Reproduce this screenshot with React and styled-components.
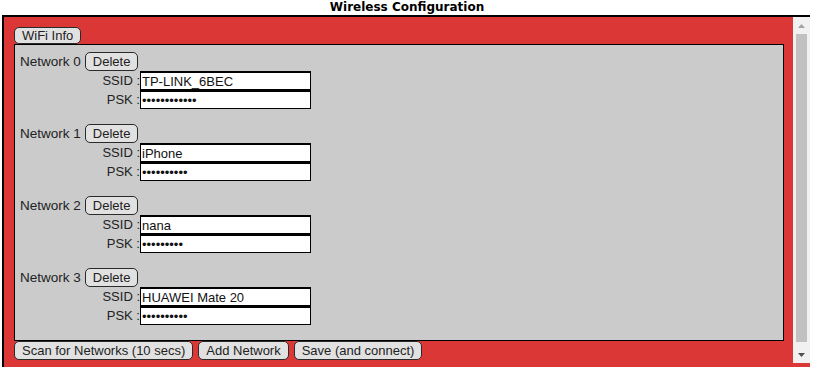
import React from 'react'
import styled, { createGlobalStyle } from 'styled-components'

const networks = [
  { ssid: 'TP-LINK_6BEC', psk: 12 },
  { ssid: 'iPhone', psk: 10 },
  { ssid: 'nana', psk: 9 },
  { ssid: 'HUAWEI Mate 20', psk: 10 },
]

const App = () => {
  return (
    <>
      <Global />
      <Page>
        <Title>Wireless Configuration</Title>
        <Box>
          <Main>
            <TabButton>WiFi Info</TabButton>
            <Panel>
              {networks.map((n, i) => (
                <Block key={i}>
                  <Header>
                    Network {i}
                    <Button>Delete</Button>
                  </Header>
                  <Field>
                    <Label>SSID :</Label>
                    <Input type="text" defaultValue={n.ssid} />
                  </Field>
                  <Field>
                    <Label>PSK :</Label>
                    <Input type="password" defaultValue={'x'.repeat(n.psk)} />
                  </Field>
                </Block>
              ))}
            </Panel>
            <Actions>
              <Button>Scan for Networks (10 secs)</Button>
              <Button>Add Network</Button>
              <Button>Save (and connect)</Button>
            </Actions>
          </Main>
          <Scrollbar>
            <Arrow>
              <svg width="7" height="4" viewBox="0 0 7 4"><path d="M0 4 L3.5 0 L7 4 Z" fill="#a3a3a3" /></svg>
            </Arrow>
            <Track>
              <Thumb />
            </Track>
            <Arrow>
              <svg width="7" height="4" viewBox="0 0 7 4"><path d="M0 0 L3.5 4 L7 0 Z" fill="#505050" /></svg>
            </Arrow>
          </Scrollbar>
        </Box>
      </Page>
    </>
  )
}

export default App

const Global = createGlobalStyle`
body {
  margin: 0;
  background: #fff;
  font-family: "Liberation Sans", Arial, sans-serif;
  font-size: 13px;
  color: #222;
}
`
const Page = styled.div`
width: 814px;
height: 367px;
overflow: hidden;
`
const Title = styled.div`
height: 15px;
line-height: 15px;
text-align: center;
font-family: "DejaVu Sans", sans-serif;
font-weight: bold;
font-size: 12px;
color: #000;
`
const Box = styled.div`
box-sizing: border-box;
margin: 0 4px 0 2px;
height: 356px;
border: 2px solid #000;
border-right: none;
background: #dc3737;
display: flex;
`
const Main = styled.div`
flex: 1;
padding: 10px 9px 10px 10px;
overflow: hidden;
`
const Scrollbar = styled.div`
width: 17px;
background: #f1f1f1;
display: flex;
flex-direction: column;
margin-bottom: 6px;
`
const Arrow = styled.div`
height: 17px;
display: flex;
align-items: center;
justify-content: center;
`
const Track = styled.div`
flex: 1;
padding: 0 3px 4px;
display: flex;
`
const Thumb = styled.div`
flex: 1;
background: #c1c1c1;
`
const Button = styled.button`
box-sizing: border-box;
height: 19px;
padding: 0 7px;
margin: 0;
font-family: "Liberation Sans", Arial, sans-serif;
font-size: 13px;
line-height: 17px;
color: #222;
background: #e1e1e1;
border: 1px solid #2a2a2a;
border-radius: 5px;
cursor: pointer;
`
const TabButton = styled(Button)`
display: block;
height: 17px;
line-height: 15px;
`
const Panel = styled.div`
box-sizing: border-box;
height: 297px;
background: #cbcbcb;
border: 1px solid #000;
padding: 7px 5px 0;
display: flex;
flex-direction: column;
gap: 15px;
`
const Block = styled.div`
display: flex;
flex-direction: column;
`
const Header = styled.div`
display: flex;
align-items: center;
gap: 4px;
height: 19px;
font-size: 13.5px;
`
const Field = styled.div`
display: flex;
align-items: center;
height: 19px;
`
const Label = styled.div`
width: 120px;
text-align: right;
`
const Input = styled.input`
box-sizing: border-box;
width: 171px;
height: 19px;
margin: 0;
padding: 0 1px;
border: 1px solid #000;
border-top-width: 2px;
background: #fff;
font-family: "Liberation Sans", Arial, sans-serif;
font-size: 13px;
color: #111;
outline: none;
`
const Actions = styled.div`
display: flex;
gap: 5px;
`
